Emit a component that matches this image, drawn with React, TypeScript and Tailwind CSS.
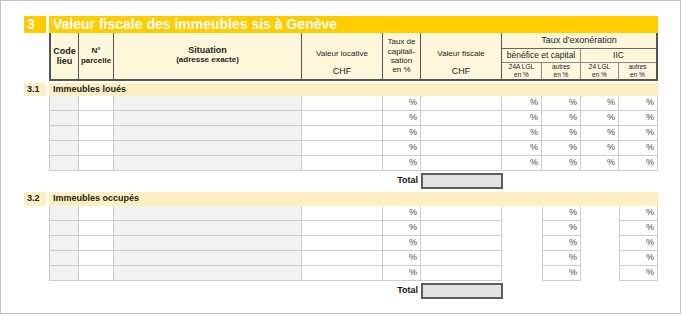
import React from 'react';

type Col = { w: string; bg: string; pct?: boolean };

const cols: Col[] = [
  { w: 'w-[30px]', bg: 'bg-[#f2f2f2]' },
  { w: 'w-[35px]', bg: 'bg-white' },
  { w: 'w-[188px]', bg: 'bg-[#f2f2f2]' },
  { w: 'w-[81px]', bg: 'bg-white' },
  { w: 'w-[38px]', bg: 'bg-white', pct: true },
  { w: 'w-[81px]', bg: 'bg-white' },
  { w: 'w-[40px]', bg: 'bg-white', pct: true },
  { w: 'w-[39px]', bg: 'bg-white', pct: true },
  { w: 'w-[38px]', bg: 'bg-white', pct: true },
  { w: 'w-[39px]', bg: 'bg-white', pct: true },
];

// columns left out in "Immeubles occupés"
const Row: React.FC<{ skip?: number[] }> = ({ skip = [] }) => (
  <div className="flex h-[15px]">
    {cols.map((c, i) => {
      if (skip.includes(i)) return <div key={i} className={c.w} />;
      const leftBorder = i === 0 || skip.includes(i - 1);
      return (
        <div
          key={i}
          className={`${c.w} ${c.bg} ${leftBorder ? 'border-l' : ''} flex items-center justify-end border-r border-b border-[#cdcdcd] pr-[3px] text-[9px] text-[#4a4a4a]`}
        >
          {c.pct ? '%' : ''}
        </div>
      );
    })}
  </div>
);

const Section: React.FC<{ num: string; title: string; skip?: number[]; bar: string }> = ({ num, title, skip, bar }) => (
  <div className="flex flex-col">
    <div className={`flex ${bar} gap-[3px] text-[9px] font-bold text-[#222]`}>
      <div className="flex w-[22px] items-center bg-[#feefc3] pl-[3px]">{num}</div>
      <div className="flex w-[609px] items-center bg-[#feefc3] pl-[4px]">{title}</div>
    </div>
    <div className="ml-[25px]">
      {[0, 1, 2, 3, 4].map((r) => (
        <Row key={r} skip={skip} />
      ))}
    </div>
    <div className="ml-[25px] mt-[2px] flex h-[16px] items-center">
      <div className="w-[372px] pr-[3px] text-right text-[9px] font-bold text-[#111]">Total</div>
      <div className="h-[16px] w-[82px] border-2 border-[#5c5c5c] bg-[#e3e3e3]" />
    </div>
  </div>
);

export default function App() {
  return (
    <div className="h-[314px] w-[681px] border border-[#c3c3c3] bg-white pl-[23px] pt-[15px] font-['Liberation_Sans',Arial,sans-serif]">
      {/* Title */}
      <div className="flex h-[17px] gap-[3px] text-[14px] font-bold text-white">
        <div className="flex w-[22px] items-center bg-[#ffcc00] pl-[3px]">3</div>
        <div className="flex w-[609px] items-center bg-[#ffcc00] pl-[4px]">Valeur fiscale des immeubles sis à Genève</div>
      </div>

      {/* Column headers */}
      <div className="ml-[25px] flex h-[48px] w-[609px] border-x-2 border-b-2 border-[#555] bg-[#fff7dc] text-[#222]">
        <div className="flex w-[28px] flex-col items-center justify-center border-r border-[#555] text-[9px] font-bold leading-[10px]">
          <span>Code</span>
          <span>lieu</span>
        </div>
        <div className="flex w-[35px] flex-col items-center justify-center border-r border-[#555] text-[8px] font-bold leading-[10px]">
          <span>N°</span>
          <span>parcelle</span>
        </div>
        <div className="flex w-[188px] flex-col items-center justify-center border-r border-[#555] pb-[2px] font-bold leading-[10px]">
          <span className="text-[9px]">Situation</span>
          <span className="text-[8px]">(adresse exacte)</span>
        </div>
        <div className="flex w-[81px] flex-col items-center border-r border-[#555] pt-[15px] pb-[1px]">
          <span className="text-[8px]">Valeur locative</span>
          <span className="mt-auto text-[9px]">CHF</span>
        </div>
        <div className="flex w-[38px] flex-col items-center justify-center border-r border-[#555] text-[8px] leading-[9.3px]">
          <span>Taux de</span>
          <span>capitali-</span>
          <span>sation</span>
          <span>en %</span>
        </div>
        <div className="flex w-[81px] flex-col items-center border-r border-[#555] pt-[15px] pb-[1px]">
          <span className="text-[8px]">Valeur fiscale</span>
          <span className="mt-auto text-[9px]">CHF</span>
        </div>
        <div className="flex w-[154px] flex-col">
          <div className="flex h-[16px] items-center justify-center border-b border-[#666] text-[9px]">Taux d’exonération</div>
          <div className="flex h-[14px] border-b border-[#8a8a8a] text-[8.5px]">
            <div className="flex w-[79px] items-center justify-center border-r border-[#8a8a8a]">bénéfice et capital</div>
            <div className="flex flex-1 items-center justify-center">IIC</div>
          </div>
          <div className="flex flex-1 text-[6.5px] leading-[8px]">
            <div className="flex w-[40px] flex-col items-center justify-center border-r border-[#8a8a8a]">
              <span>24A LGL</span>
              <span>en %</span>
            </div>
            <div className="flex w-[39px] flex-col items-center justify-center border-r border-[#8a8a8a]">
              <span>autres</span>
              <span>en %</span>
            </div>
            <div className="flex w-[38px] flex-col items-center justify-center border-r border-[#8a8a8a]">
              <span>24 LGL</span>
              <span>en %</span>
            </div>
            <div className="flex w-[37px] flex-col items-center justify-center">
              <span>autres</span>
              <span>en %</span>
            </div>
          </div>
        </div>
      </div>

      <div className="mt-[2px]">
        <Section num="3.1" title="Immeubles loués" bar="h-[13px]" />
      </div>
      <div className="mt-[3px]">
        <Section num="3.2" title="Immeubles occupés" skip={[6, 8]} bar="h-[14px]" />
      </div>
    </div>
  );
}
